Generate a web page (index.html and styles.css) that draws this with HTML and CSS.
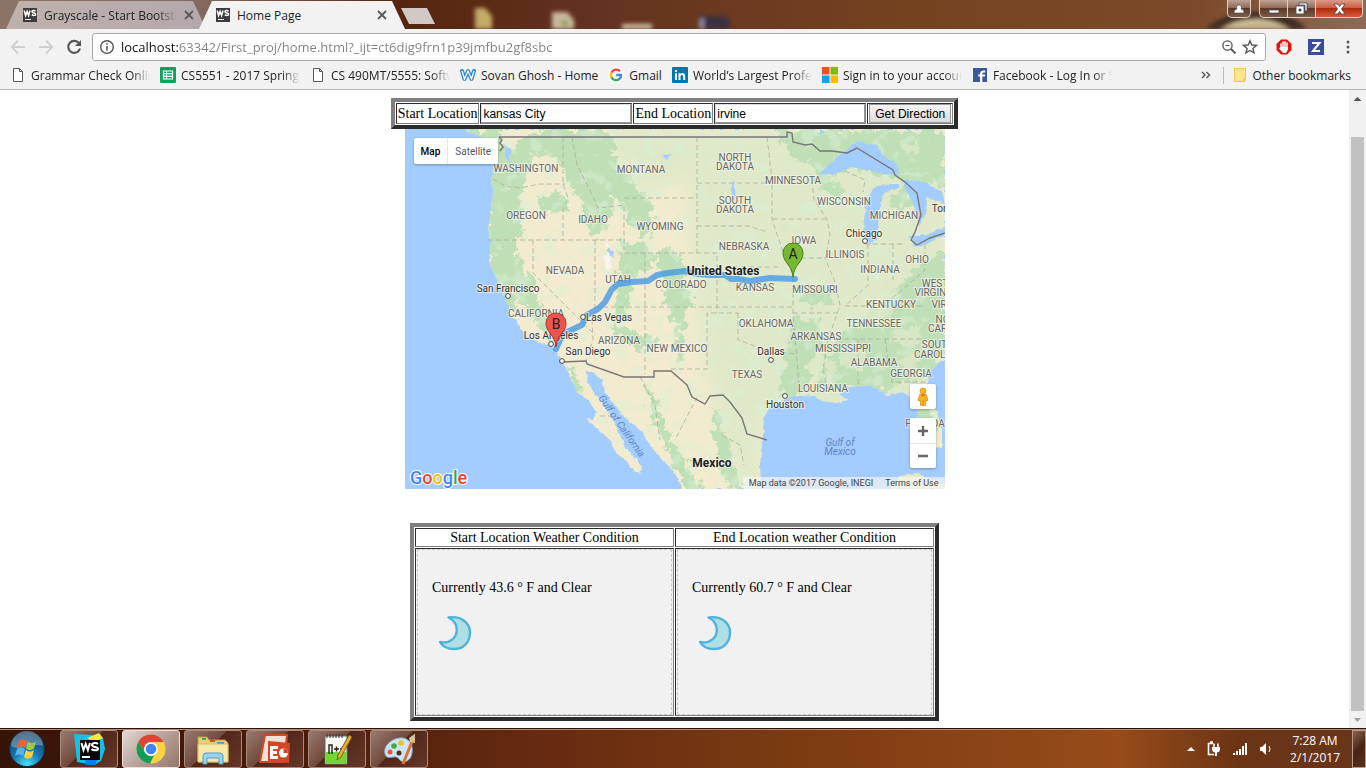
FILE: index.html
```html
<!DOCTYPE html>
<html lang="en">
<head>
<meta charset="utf-8">
<title>Home Page</title>
<link rel="stylesheet" href="styles.css">
</head>
<body>
<svg class="defs" aria-hidden="true">
  <defs>
    <symbol id="ws" viewBox="0 0 14 14"><rect width="14" height="14" fill="#3c3c3c"/><path d="M1.200 2.500l1.400 5 1.500-4 1.500 4 1.400-5M12.500 3.200c-1-1-3.500-.9-3.500.6 0 1.600 3.700.8 3.700 2.400 0 1.500-2.700 1.500-3.900.4" fill="none" stroke="#fff" stroke-width="1.500"/><path d="M2 11.500h6" stroke="#fff" stroke-width="1.200"/></symbol>
    <symbol id="doc" viewBox="0 0 16 16"><path d="M3.500 1.500h6l3 3v10h-9zM9.500 1.500v3h3" fill="#fff" stroke="#5a5a5a"/></symbol>
    <symbol id="close" viewBox="0 0 10 10"><path d="M1 1l8 8M9 1l-8 8" stroke="#5a5a5a" stroke-width="1.800"/></symbol>
    <symbol id="moon" viewBox="0 0 34 36"><path d="M10.500 2.500C23 .5 32.500 8 32 18.500C31.500 28 25 34 16 34C10 34 4.500 31.500 2 27C12.500 29 19 22 18.800 14.500C18.600 9 15.500 5 10.500 2.500Z" fill="#aedfe5" stroke="#50b2df" stroke-width="2.400" stroke-linejoin="round"/></symbol>
  </defs>
</svg>

<header class="browser">
  <div class="tabstrip">
    <div class="tab tab-back">
      <svg class="fav"><use href="#ws"/></svg><a class="tab-title" href="#">Grayscale - Start Bootstra</a>
      <button class="plain" aria-label="Close tab"><svg class="x"><use href="#close"/></svg></button>
    </div>
    <div class="tab tab-front">
      <svg class="fav"><use href="#ws"/></svg><a class="tab-title" href="#">Home Page</a>
      <button class="plain" aria-label="Close tab"><svg class="x"><use href="#close"/></svg></button>
    </div>
    <button class="newtab" aria-label="New tab"></button>
    <div class="wallpaper" aria-hidden="true">
      <svg width="280" height="29" viewBox="0 0 280 29"><g class="soft"><path d="M8 8h10l7 8v13H8z" fill="#c4ab68"/><path d="M85 12h15l7 8v9H85z" fill="#c7b99c"/><path d="M93 23l6-3 2 6z" fill="#77903f"/><path d="M155 24h30v5h-30z" fill="#cfc0a4"/><path d="M232 16h22l8 2v11h-30z" fill="#3a3040"/><path d="M232 18h6v11h-6z" fill="#8b86a5"/></g></svg>
      <svg width="140" height="29" viewBox="0 0 140 29"><g class="soft"><path d="M8 29Q30 10 70 12Q96 14 110 29Z" fill="#3d2c20"/><path d="M22 29Q40 17 62 18Q82 20 94 29Z" fill="#c9b894"/></g></svg>
    </div>
    <div class="window-buttons">
      <button class="glass user" aria-label="Profile"><svg width="12" height="12" viewBox="0 0 12 12"><path d="M6 2a2.500 2.500 0 0 1 2 4c2 .5 3 1.500 3 4H1c0-2.500 1-3.500 3-4a2.500 2.500 0 0 1 2-4z" fill="#fff" stroke="#555" stroke-width=".7"/></svg></button>
      <div class="glass-group">
        <button class="glass min" aria-label="Minimize"><svg width="12" height="12" viewBox="0 0 12 12"><path d="M1 7h10v3H1z" fill="#fff" stroke="#445" stroke-width=".8"/></svg></button>
        <button class="glass max" aria-label="Restore"><svg width="13" height="13" viewBox="0 0 13 13"><path d="M4 1h8v8h-2V3H4z" fill="#fff" stroke="#445" stroke-width=".8"/><path d="M1 4h8v8H1zM4 7v2h2V7z" fill="#fff" fill-rule="evenodd" stroke="#445" stroke-width=".8"/></svg></button>
        <button class="glass shut" aria-label="Close"><svg width="13" height="12" viewBox="0 0 13 12"><path d="M1 1h3.500l2 2.500L8.500 1H12L8.500 6l3.500 5H8.500l-2-2.500-2 2.500H1l3.500-5z" fill="#fff" stroke="#445" stroke-width=".8"/></svg></button>
      </div>
    </div>
  </div>

  <div class="toolbar">
    <button class="plain nav" aria-label="Back"><svg width="16" height="16" viewBox="0 0 16 16"><path d="M15 8H2M8 1.500L1.800 8 8 14.500" fill="none" stroke="#cfcfcf" stroke-width="1.900"/></svg></button>
    <button class="plain nav" aria-label="Forward"><svg width="16" height="16" viewBox="0 0 16 16"><path d="M1 8h13M8 1.500L14.200 8 8 14.500" fill="none" stroke="#cfcfcf" stroke-width="1.900"/></svg></button>
    <button class="plain nav" aria-label="Reload"><svg width="16" height="16" viewBox="0 0 16 16"><path d="M13 4.200A6 6 0 1 0 14 9.500" fill="none" stroke="#555" stroke-width="2.100"/><path d="M15 1v6H9z" fill="#555"/></svg></button>
    <div class="omnibox">
      <svg width="16" height="16" viewBox="0 0 16 16"><circle cx="8" cy="8" r="6.300" fill="none" stroke="#555" stroke-width="1.400"/><path d="M8 7v4.500M8 4.200v1.600" stroke="#555" stroke-width="1.600"/></svg>
      <input class="url" type="text" aria-label="Address" value="localhost:63342/First_proj/home.html?_ijt=ct6dig9frn1p39jmfbu2gf8sbc">
      <button class="plain" aria-label="Zoom"><svg width="14" height="14" viewBox="0 0 14 14"><circle cx="5.500" cy="5.500" r="4.600" fill="none" stroke="#555" stroke-width="1.300"/><path d="M9 9l4.500 4.500" stroke="#555" stroke-width="1.800"/><path d="M3.500 5.500h4" stroke="#555"/></svg></button>
      <button class="plain" aria-label="Bookmark"><svg width="16" height="16" viewBox="0 0 16 16"><path d="M8 1.800l1.800 4.200 4.700.4-3.600 3 1.100 4.500L8 11.500l-4 2.400 1.100-4.500-3.600-3 4.700-.4z" fill="none" stroke="#555" stroke-width="1.400"/></svg></button>
    </div>
    <div class="extensions">
      <button class="plain" aria-label="Adblock"><svg width="16" height="16" viewBox="0 0 16 16"><path d="M5 .5h6L15.500 5v6L11 15.500H5L.5 11V5z" fill="#e0140f"/><path d="M5 5v4M7 3v6M9 2.700V9M11 4v6" stroke="#fff" stroke-width="1.500" stroke-linecap="round"/><path d="M4.300 8h7.400v3L10 14H7L3 9.500z" fill="#fff"/></svg></button>
      <button class="plain" aria-label="Zotero"><svg width="16" height="16" viewBox="0 0 16 16"><rect width="16" height="16" fill="#3d4b9c"/><path d="M4 4h7.500L5 12h7" fill="none" stroke="#fff" stroke-width="2"/></svg></button>
      <button class="plain" aria-label="Menu"><svg width="16" height="16" viewBox="0 0 16 16"><g fill="#5a5a5a"><circle cx="8" cy="3" r="1.500"/><circle cx="8" cy="8" r="1.500"/><circle cx="8" cy="13" r="1.500"/></g></svg></button>
    </div>
  </div>

  <nav class="bookmarks">
    <a href="#"><svg><use href="#doc"/></svg><span class="cut">Grammar Check Onlin</span></a>
    <a href="#"><svg viewBox="0 0 16 16"><rect width="16" height="16" rx="1" fill="#12a15c"/><path d="M3.500 4h9v8h-9zM3.500 6.700h9M3.500 9.300h9M6.500 4v8" fill="none" stroke="#fff" stroke-width="1.200"/></svg><span class="cut">CS5551 - 2017 Spring</span></a>
    <a href="#"><svg><use href="#doc"/></svg><span class="cut">CS 490MT/5555: Softw</span></a>
    <a href="#"><svg viewBox="0 0 16 16"><path d="M2 4l2.500 8L8 4l3.500 8L14 4" fill="none" stroke="#2d87df" stroke-width="4" stroke-linejoin="round" stroke-linecap="round"/><path d="M2 4l2.500 8L8 4l3.500 8L14 4" fill="none" stroke="#fff" stroke-width="1.300"/></svg><span>Sovan Ghosh - Home</span></a>
    <a href="#"><svg viewBox="0 0 16 16"><circle cx="8" cy="8" r="8" fill="#fff"/><g fill="none" stroke-width="2.300"><path d="M12 4.300A5.100 5.100 0 0 0 3.500 5.600" stroke="#ea4335"/><path d="M3.500 5.500a5.100 5.100 0 0 0 0 5" stroke="#fbbc05"/><path d="M3.500 10.400a5.100 5.100 0 0 0 7.900 1.500" stroke="#34a853"/><path d="M11.200 12.200A5 5 0 0 0 13 8H8.200" stroke="#4285f4"/></g></svg><span>Gmail</span></a>
    <a href="#"><svg viewBox="0 0 16 16"><rect width="16" height="16" rx="1" fill="#0077b5"/><path d="M3 6.200h2V13H3zM3 3h2v2H3zM6.500 6.200h2v1c1.300-1.900 4.700-1.300 4.700 1.600V13h-2V9.500c0-2.300-2.700-2-2.700 0V13h-2z" fill="#fff"/></svg><span class="cut">World’s Largest Profe</span></a>
    <a href="#"><svg viewBox="0 0 16 16"><path d="M0 0h7.500v7.500H0z" fill="#f25022"/><path d="M8.500 0H16v7.500H8.500z" fill="#7fba00"/><path d="M0 8.500h7.500V16H0z" fill="#00a4ef"/><path d="M8.500 8.500H16V16H8.500z" fill="#ffb900"/></svg><span class="cut">Sign in to your accour</span></a>
    <a href="#"><svg viewBox="0 0 16 16"><rect x="1" y="1" width="14" height="14" fill="#3b5998"/><path d="M8 15V9.500H6.200v-2H8C7.800 4.700 9.500 3 13.200 3.500v2c-2-.2-3 0-2.900 2h2.700v2h-2.700V15z" fill="#fff"/></svg><span class="cut">Facebook - Log In or S</span></a>
    <div class="more">
      <button class="plain" aria-label="More bookmarks"><svg width="10" height="8" viewBox="0 0 10 8"><path d="M1 1l3 3-3 3M5.500 1l3 3-3 3" fill="none" stroke="#555" stroke-width="1.400"/></svg></button>
      <a class="other" href="#"><svg viewBox="0 0 16 16"><path d="M2.500 1.500h11v9l-1 4h-10z" fill="#ffe591" stroke="#e9c651"/><path d="M11.500 13.500v-2.500h2v3.500h-3z" fill="#f4c842"/></svg><span>Other bookmarks</span></a>
    </div>
  </nav>
</header>

<div class="viewport">
  <main class="page">
    <table class="frame directions">
      <tr>
        <td><label for="start">Start Location</label></td>
        <td><input id="start" type="text" value="kansas City"></td>
        <td><label for="end">End Location</label></td>
        <td><input id="end" type="text" value="irvine"></td>
        <td><button class="go">Get Direction</button></td>
      </tr>
    </table>

    <section class="map" aria-label="Route map">
      <svg class="map-art" viewBox="405 129 540 360">
        <defs>
          <filter id="rough" x="-5%" y="-5%" width="110%" height="110%"><feTurbulence type="fractalNoise" baseFrequency=".11" numOctaves="3" seed="4"/><feDisplacementMap in="SourceGraphic" scale="20" xChannelSelector="R" yChannelSelector="G"/></filter>
          <filter id="coast" x="-5%" y="-5%" width="110%" height="110%"><feTurbulence type="fractalNoise" baseFrequency=".2" numOctaves="2" seed="8"/><feDisplacementMap in="SourceGraphic" scale="4" xChannelSelector="R" yChannelSelector="G"/></filter>
          <filter id="speckle" x="0" y="0" width="100%" height="100%"><feTurbulence type="fractalNoise" baseFrequency=".07" numOctaves="4" seed="12"/><feColorMatrix values="0 0 0 0 .7  0 0 0 0 .86  0 0 0 0 .66  0 7 0 0 -3.8"/></filter>
          <filter id="feather"><feGaussianBlur stdDeviation="9"/></filter>
          <clipPath id="land"><path d="M465 129L486 140L497 150L493 169L491 179L493 192L491 209L488 230L491 242L489 262L497 279L502 292L505 296L509 312L518 323L523 333L532 339L542 343L552 347L558 353L562 362L570 375L577 392L588 400L597 413L593 419L585 418L597 428L612 442L615 452L625 460L635 472L640 474L642 467L635 458L625 448L620 435L612 418L603 403L595 395L588 382L586 372L592 372L602 380L605 392L615 405L625 418L642 432L652 448L665 462L678 478L683 489L761 489L760 465L762 442L764 428L763 418L770 408L780 402L790 397L810 395L823 401L837 403L847 400L839 394L850 388L870 385L887 395L903 392L910 397L918 413L915 432L933 448L942 447L942 428L933 402L927 385L930 372L937 363L945 360V129Z"/></clipPath>
        </defs>
        <rect x="405" y="129" width="540" height="360" fill="#a3ccff"/>
        <g filter="url(#coast)">
          <g clip-path="url(#land)">
            <rect x="405" y="129" width="540" height="360" fill="#f2ebcf"/>
            <path d="M685 129H945V420H760V489H740L715 410L700 330L690 240Z" fill="#dfe9c9" filter="url(#feather)"/>
            <path d="M600 129H700V170L640 195Z" fill="#dfe9c9" filter="url(#feather)"/>
            <g fill="#bfdfb7" filter="url(#rough)">
              <path d="M465 129H500L503 150L540 129H610L618 165L640 190L655 210L650 238L628 225L615 190L606 230L590 240L582 205L570 185L560 160L535 155L522 185L524 230L510 246L488 240L490 180Z"/>
              <path d="M486 235L510 235L522 265L540 300L548 320L560 340L550 342L530 315L510 285L520 318L507 310L490 268Z"/>
              <path d="M620 240L650 245L655 262L632 278L625 320L612 320L618 285Z"/>
              <path d="M655 250L680 252L690 300L685 330L670 318L665 295Z"/>
              <path d="M535 196L562 190L570 210L545 214Z"/>
              <path d="M608 325L640 330L660 345L640 350L620 340Z"/>
              <path d="M670 350L682 320L685 362Z"/>
              <path d="M644 380L655 395L665 425L680 455L705 489H684L665 445L650 415Z"/>
              <path d="M715 405L728 440L742 489H730L715 450Z"/>
              <path d="M565 360L575 370L582 395L575 390Z"/>
              <path d="M775 129H945V185L900 180L860 170L830 175L850 195L820 190L812 165L790 155Z"/>
              <path d="M885 190L908 190L914 207L895 210Z"/>
              <path d="M793 315L820 320L825 345L808 360L812 380L800 395L780 398L783 365Z"/>
              <path d="M815 390L830 350L850 330L885 300L920 265L945 250V355L920 380L880 392L850 388Z"/>
              <path d="M795 285L830 290L835 306L800 305Z"/>
              <path d="M912 400L928 400L938 430L922 425Z"/>
            </g>
            <g fill="#dfe9c9" opacity=".75" filter="url(#rough)"><path d="M850 310L900 290L890 320L855 330ZM845 345L870 350L860 370L842 365ZM890 335L925 325L910 350ZM895 360L920 355L915 380ZM825 355L835 365L833 385L825 380ZM900 145L920 142L915 160Z"/></g>
            <rect x="405" y="129" width="540" height="360" filter="url(#speckle)" opacity=".5"/>
            <g fill="#a3ccff">
              <path d="M818 174L830 164L843 152L857 142L877 145L882 155L897 164L900 175L883 174L867 170L850 167L837 174Z"/>
              <path d="M898 184L887 184L874 187L866 202L863 232L870 245L877 239L879 212L884 193L900 188Z"/>
              <path d="M903 180L923 182L942 192L945 204L927 197L926 215L919 226L913 203L905 189Z"/>
              <path d="M909 235L927 235L945 226V234L927 244L915 247Z"/>
              <path d="M607 246L613 252L614 258L607 252ZM505 145L511 149L509 162L505 155ZM733 180L736 194L734 202L731 190ZM820 129L825 132L821 135ZM662 155L671 154L667 159Z"/>
            </g>
            <path d="M604 256L609 254L612 270L606 268ZM604 245L608 242L608 248Z" fill="#f8f6ef"/>
          </g>
          <path d="M890 489L900 476L916 473L934 480L945 486V489Z" fill="#e4e9c8"/>
        </g>
        <path class="state" d="M493 179L505 186L520 188L540 184H565M563 137V184L568 198L563 208V240M488 240H625M572 137L577 165L590 190L598 208L624 205V253M624 198H697M697 137V253M624 253H717V313M697 183H772M697 226H748L768 232M533 240V273L595 335M595 240V307L592 320L593 340L586 361M645 253V374M595 307H793M717 267H780M738 313V340L760 348L795 354M671 369H707V313H738M767 137L772 180V219L785 258L793 275V313L796 350L800 397M773 219H827M785 258H825M793 313H840M820 137M812 180L814 200L827 219L830 235L825 258L835 282L840 305L828 340L823 370L827 388H842M865 244H905M868 244V285L845 306H925M893 244V280M925 244V270L890 300M836 339H925M858 339V386M885 339L892 382H927M845 171L865 180L863 192M697 397L675 440M600 416H612M640 377L655 405L660 440M722 435L740 445L744 465"/>
        <g class="border">
          <path d="M499 137H787V132L792 133L793 142L805 145L812 144L820 151L832 151L847 153L857 148L893 170L895 175L905 182L917 193L921 215L915 232L911 240L917 245L930 238L945 233"/>
          <path d="M562 362L586 361L587 364L624 377H654V371H671L687 385L692 397L705 404L710 396L723 395L730 402L742 418L747 434L767 440"/>
          <path d="M499 137l3 3-2 3 3 4-3 4"/>
        </g>
        <g class="label state-name">
          <text x="526" y="172">WASHINGTON</text><text x="641" y="173">MONTANA</text><text x="735" y="161">NORTH</text><text x="735" y="170">DAKOTA</text><text x="793" y="184">MINNESOTA</text><text x="526" y="219">OREGON</text><text x="593" y="223">IDAHO</text><text x="660" y="230">WYOMING</text><text x="735" y="204">SOUTH</text><text x="735" y="213">DAKOTA</text><text x="844" y="205">WISCONSIN</text><text x="894" y="219">MICHIGAN</text><text x="744" y="250">NEBRASKA</text><text x="804" y="244">IOWA</text><text x="845" y="258">ILLINOIS</text><text x="880" y="273">INDIANA</text><text x="917" y="263">OHIO</text><text x="565" y="274">NEVADA</text><text x="618" y="283">UTAH</text><text x="681" y="288">COLORADO</text><text x="755" y="291">KANSAS</text><text x="815" y="293">MISSOURI</text><text x="935" y="287">WEST</text><text x="935" y="296">VIRGINIA</text><text x="891" y="308">KENTUCKY</text><text x="952" y="308">VIRGINIA</text><text x="536" y="317">CALIFORNIA</text><text x="766" y="327">OKLAHOMA</text><text x="874" y="327">TENNESSEE</text><text x="952" y="323">NORTH</text><text x="952" y="332">CAROLINA</text><text x="816" y="340">ARKANSAS</text><text x="619" y="344">ARIZONA</text><text x="677" y="352">NEW MEXICO</text><text x="843" y="352">MISSISSIPPI</text><text x="874" y="366">ALABAMA</text><text x="938" y="348">SOUTH</text><text x="938" y="358">CAROLINA</text><text x="747" y="378">TEXAS</text><text x="911" y="377">GEORGIA</text><text x="823" y="392">LOUISIANA</text><text x="925" y="427">FLORIDA</text>
        </g>
        <path class="route" d="M795 279L770 278L750 281L738 279L731 279L725 275L710 275L698 274L685 271L668 273L657 275L648 281L632 282L618 284L612 289L605 302L598 309L587 315L582 325L565 333L560 340L556 349"/>
        <g class="label city">
          <text x="508" y="292">San Francisco</text><text x="609" y="321">Las Vegas</text><text x="551" y="339">Los Angeles</text><text x="588" y="355">San Diego</text><text x="864" y="237">Chicago</text><text x="771" y="355">Dallas</text><text x="785" y="408">Houston</text><text x="949" y="212">Toronto</text>
        </g>
        <g class="label country"><text x="723" y="275">United States</text><text x="712" y="467">Mexico</text></g>
        <g class="sea"><text x="840" y="446">Gulf of</text><text x="840" y="455">Mexico</text><text transform="translate(619 428) rotate(55)">Gulf of California</text></g>
        <g class="dot"><circle cx="508" cy="296" r="2.400"/><circle cx="583" cy="317" r="2.400"/><circle cx="551" cy="344" r="2.400"/><circle cx="562" cy="361" r="2.400"/><circle cx="865" cy="241" r="2.400"/><circle cx="771" cy="360" r="2.400"/><circle cx="785" cy="396" r="2.400"/></g>
        <g class="pin"><path d="M793 277C792 264 783 263 783 253A10 10 0 0 1 803 253C803 263 794 264 793 277Z" fill="#76b832" stroke="#4b7d1b"/><text x="793" y="259">A</text></g>
        <g class="pin"><path d="M556 347C555 334 546 333 546 323A10 10 0 0 1 566 323C566 333 557 334 556 347Z" fill="#ef5350" stroke="#b13230"/><text x="556" y="329">B</text></g>
        <text class="google" x="410" y="484"><tspan fill="#4285f4">G</tspan><tspan fill="#ea4335">o</tspan><tspan fill="#fbbc05">o</tspan><tspan fill="#4285f4">g</tspan><tspan fill="#34a853">l</tspan><tspan fill="#ea4335">e</tspan></text>
      </svg>
      <div class="map-types"><button class="current">Map</button><button>Satellite</button></div>
      <div class="map-tools">
        <button class="pegman" aria-label="Street View"><svg width="14" height="20" viewBox="0 0 14 20"><circle cx="7" cy="4" r="3" fill="#fbb21d" stroke="#c98510" stroke-width=".6"/><path d="M3.500 7.500h7l1.500 6h-2l-.6 5H4.600l-.6-5H2z" fill="#fbb21d" stroke="#c98510" stroke-width=".6"/><path d="M4.500 7.500h5L7 10z" fill="#e5731d"/><path d="M7 13v5" stroke="#c98510" stroke-width=".8"/></svg></button>
        <div class="zoomer"><button aria-label="Zoom in"><svg width="10" height="10" viewBox="0 0 10 10"><path d="M5 0v10M0 5h10" stroke="#666" stroke-width="2.400"/></svg></button><button aria-label="Zoom out"><svg width="10" height="10" viewBox="0 0 10 10"><path d="M0 5h10" stroke="#666" stroke-width="2.400"/></svg></button></div>
      </div>
      <div class="credits"><span>Map data ©2017 Google, INEGI</span><a href="#">Terms of Use</a></div>
    </section>

    <table class="frame weather">
      <tr><th>Start Location Weather Condition</th><th>End Location weather Condition</th></tr>
      <tr>
        <td><div class="report"><p>Currently 43.6 ° F and Clear</p><svg class="moon" role="img" aria-label="Clear night"><use href="#moon"/></svg></div></td>
        <td><div class="report"><p>Currently 60.7 ° F and Clear</p><svg class="moon" role="img" aria-label="Clear night"><use href="#moon"/></svg></div></td>
      </tr>
    </table>
  </main>
  <div class="scrollbar" aria-hidden="true">
    <svg width="17" height="17" viewBox="0 0 17 17"><path d="M4.500 11h8l-4-4z" fill="#505050"/></svg>
    <div class="track"><div class="thumb"></div></div>
    <svg width="17" height="17" viewBox="0 0 17 17"><path d="M5 7h7l-3.500 4z" fill="#a3a3a3"/></svg>
  </div>
</div>

<footer class="taskbar">
  <button class="plain orb" aria-label="Start"><svg width="38" height="38" viewBox="0 0 38 38"><defs><radialGradient id="orb" cx=".5" cy=".95" r=".9"><stop offset="0" stop-color="#4ae4ff"/><stop offset=".45" stop-color="#1679b4"/><stop offset="1" stop-color="#123f68"/></radialGradient></defs><circle cx="19" cy="19" r="17.500" fill="url(#orb)" stroke="#1b2c3c"/><path d="M3 16A16 15 0 0 1 35 16C27 12 13 22 3 16Z" fill="#fff" opacity=".28"/><path d="M11 11c3-2 5-2 8 0l-2 7c-3-2-5-2-8 0z" fill="#f1622c"/><path d="M20 11.500c3 2 5 2 8 0l-2 7c-3 2-5 2-8 0z" fill="#9bcb44"/><path d="M9 19c3-2 5-2 8 0l-2 7c-3-2-5-2-8 0z" fill="#53b5ec"/><path d="M18 20c3 2 5 2 8 0l-2 7c-3 2-5 2-8 0z" fill="#ffd03c"/></svg></button>
  <div class="apps">
    <button aria-label="WebStorm"><svg viewBox="0 0 32 32"><path d="M1 1l18 1 11 3 2 11-4 12-7 4-17-3z" fill="#18bfe5"/><path d="M14 5L26 0l4 5-8 4z" fill="#f4ec43"/><path d="M12 25h13l-3 7H13z" fill="#0a7fe0"/><rect x="7" y="7" width="20" height="20" fill="#080808"/><path d="M8.500 10l2 7 2.200-6 2.200 6 2-7M25 11c-2-2-6-1-6 1 0 2.500 6 1.300 6 3.700 0 2.300-5 2-6.500.3" fill="none" stroke="#fff" stroke-width="2"/><path d="M9 24h8" stroke="#fff" stroke-width="2"/></svg></button>
    <button class="running" aria-label="Chrome"><svg viewBox="0 0 32 32"><circle cx="16" cy="16" r="14.500" fill="#fbd23f"/><path d="M3.400 8.800A14.500 14.500 0 0 1 28.600 9H16a7 7 0 0 0-6.500 9.500z" fill="#db4437"/><path d="M3.400 8.800L10 19.500A7 7 0 0 0 19 22.500L15 30.500A14.500 14.500 0 0 1 3.400 8.800z" fill="#0f9d58"/><circle cx="16" cy="16" r="6.800" fill="#fff"/><circle cx="16" cy="16" r="5.300" fill="#4285f4"/></svg></button>
    <button aria-label="Explorer"><svg viewBox="0 0 32 32"><path d="M1 4h9l2 3h16l3 3v19H1z" fill="#e9cf79" stroke="#b89a48"/><path d="M5 5h4v2H5z" fill="#35b34a"/><path d="M13 7h5v2h-5z" fill="#d84c36"/><path d="M20 9h7v2h-7z" fill="#3595dd"/><path d="M1 11h30v18H1z" fill="#f8e9a7" stroke="#d2ba6d"/><path d="M6 31v-8q0-3 3-3h14q3 0 3 3v8h-4v-6H10v6z" fill="#98d4ee" stroke="#4e9dc6"/></svg></button>
    <button aria-label="PowerPoint"><svg viewBox="0 0 32 32"><path d="M6 2h22l-3 27H1z" fill="#f5e1d4" stroke="#d24726" stroke-width="2"/><path d="M9 8l22 2-1 20-21-2z" fill="#d24726"/><path d="M11 13h8v3h-5v2h4v3h-4v2h5v3h-8z" fill="#fff"/><circle cx="24.500" cy="20" r="4.500" fill="#fff"/><path d="M24.500 20v-4.500a4.500 4.500 0 0 1 4.500 4.500z" fill="#d24726"/></svg></button>
    <button aria-label="Notepad++"><svg viewBox="0 0 32 32"><path d="M4 3h22v28H4z" fill="#f8fbf5" stroke="#686868"/><path d="M4.500 19h21v11.500h-21z" fill="#70d632"/><path d="M6 1v4M9 1v4M12 1v4M15 1v4M18 1v4M21 1v4" stroke="#333"/><path d="M8 21v-9h3v9M13 16h5M15.500 13.500v5M19 16h5M21.500 13.500v5" stroke="#222" stroke-width="1.400" fill="none"/><path d="M28 2l3 2-11 20-4 3 1-5z" fill="#e9af34" stroke="#7c5923"/></svg></button>
    <button aria-label="Paint"><svg viewBox="0 0 32 32"><path d="M12 6C23 2 31 9 29 20C28 29 19 31 16 26C13 21 6 27 3 23C-1 17 4 9 12 6Z" fill="#cfe4f3" stroke="#7ba5c4"/><circle cx="7" cy="19" r="2.500" fill="#df5548"/><circle cx="11" cy="13" r="2.800" fill="#44ad42"/><circle cx="18" cy="10" r="2.800" fill="#edbc35"/><circle cx="16" cy="20" r="2.500" fill="#4d3324"/><path d="M30 6L20 31" stroke="#d9772d" stroke-width="3"/><path d="M27 9l-1-4 7-5-1 10z" fill="#d9c09a"/></svg></button>
  </div>
  <div class="tray">
    <svg width="10" height="6" viewBox="0 0 10 6"><path d="M1 5h8L5 1z" fill="#fff"/></svg>
    <svg width="16" height="16" viewBox="0 0 16 16"><path d="M7 2.500H2.500v11H8M4 1h3" stroke="#fff" stroke-width="1.600" fill="none"/><path d="M6 6h8v3q-1 2.500-3 2.500V15H9v-3.500Q7 11.500 6 9z" fill="#fff"/><path d="M8 2.500V6M12 2.500V6" stroke="#fff" stroke-width="1.600"/></svg>
    <svg width="16" height="14" viewBox="0 0 16 14"><path d="M1 11h2v2H1zM4 9h2v4H4zM7 7h2v6H7zM10 4h2v9h-2zM13 1h2v12h-2z" fill="#fff"/></svg>
    <svg width="14" height="14" viewBox="0 0 14 14"><path d="M2 5h2l4-4v12L4 9H2z" fill="#fff"/><path d="M11 4q2 3 0 6" fill="none" stroke="#fff"/></svg>
    <time class="clock"><span>7:28 AM</span><span>2/1/2017</span></time>
    <button class="desktop" aria-label="Show desktop"></button>
  </div>
</footer>
</body>
</html>
```

FILE: styles.css
```css
* { box-sizing: border-box; }
body { margin: 0; height: 100vh; display: flex; flex-direction: column; overflow: hidden; background: #fff; font-family: "Open Sans", "Noto Sans", sans-serif; font-size: 12px; color: #222; }
a { color: inherit; text-decoration: none; }
svg { flex: none; display: block; }
.defs { position: absolute; width: 0; height: 0; }
.plain { border: 0; padding: 0; background: none; display: flex; align-items: center; justify-content: center; }

/* Browser frame */
.browser { flex: none; }
.tabstrip { height: 29px; display: flex; align-items: flex-start; padding-left: 6px; background: linear-gradient(90deg, #8d7469 0, #84695f 200px, #55250f 400px, #643320 600px, #74421f 900px, #7c4a2a 1200px, #8f6a57 100%); }
.tab { height: 28px; margin-top: 1px; display: flex; align-items: center; gap: 7px; padding: 0 12px 0 17px; clip-path: polygon(0 100%, 13px 0, calc(100% - 13px) 0, 100% 100%); }
.tab-back { width: 200px; background: linear-gradient(90deg, #bfb2ac, #b3a8ac); }
.tab-back .fav + .tab-title { mask-image: linear-gradient(90deg, #000 85%, transparent); }
.tab-front { width: 206px; margin-left: -7px; background: #f2f2f2; padding-right: 18px; }
.tab-title { flex: 1; overflow: hidden; white-space: nowrap; }
.fav { width: 14px; height: 14px; }
.x { width: 10px; height: 10px; }
.newtab { width: 34px; height: 16px; margin: 8px 0 0 -4px; border: 0; padding: 0; background: #d0c9c5; clip-path: polygon(0 0, 26px 0, 100% 100%, 8px 100%); }
.wallpaper { flex: 1; display: flex; justify-content: space-between; padding-left: 32px; margin-right: -110px; }
.soft { filter: blur(2px); }
.window-buttons { display: flex; gap: 8px; padding-right: 3px; position: relative; }
.glass-group { display: flex; }
.glass { height: 18px; padding: 0; display: flex; align-items: center; justify-content: center; border: 1px solid #e0d0c6; border-top: 0; background: linear-gradient(#bda294, #8a6653 50%, #5d3a28 50%, #7d5c4a); }
.user { width: 24px; border-radius: 0 0 5px 5px; }
.min { width: 29px; border-radius: 0 0 0 5px; }
.max { width: 27px; border-width: 0 0 1px; }
.shut { width: 48px; border-radius: 0 0 5px 0; background: linear-gradient(#dd9a86, #c9583d 50%, #b22a0c 50%, #d65a3c); }
.toolbar { display: flex; align-items: center; padding: 4px 10px 0; background: #f2f2f2; }
.nav { width: 16px; margin-right: 12px; }
.nav + .nav + .nav { margin-right: 10px; }
.omnibox { flex: 1; height: 28px; display: flex; align-items: center; gap: 6px; padding: 0 7px 0 6px; border: 1px solid #a9a9a9; border-radius: 3px; background: #fff; }
.url { flex: 1; min-width: 0; border: 0; padding: 0; outline: 0; font: 13px "Open Sans", "Noto Sans", sans-serif; color: transparent; background: linear-gradient(90deg, #111 57px, #808080 57px); -webkit-background-clip: text; background-clip: text; }
.extensions { display: flex; gap: 16px; padding-left: 10px; }
.bookmarks { height: 29px; display: flex; align-items: center; gap: 10px; padding: 0 15px 0 10px; background: #f2f2f2; border-bottom: 1px solid #b6b6b6; }
.bookmarks a { display: flex; align-items: center; gap: 5px; white-space: nowrap; }
.bookmarks a svg { width: 16px; height: 16px; }
.cut { width: 119px; overflow: hidden; mask-image: linear-gradient(90deg, #000 85%, transparent); }
.more { margin-left: auto; display: flex; align-items: center; gap: 12px; }
.more .other { gap: 4px; padding-left: 8px; border-left: 1px solid #bbb; }

/* Page */
.viewport { flex: 1; min-height: 0; display: flex; }
.page { flex: 1; display: flex; flex-direction: column; align-items: center; padding-top: 8px; font-family: "Liberation Serif", serif; font-size: 14px; color: #000; overflow: hidden; }
.frame { border: 4px solid; border-color: #808080 #2c2c2c #2c2c2c #808080; border-collapse: separate; border-spacing: 1px; }
.frame td, .frame th { border: 1px solid; border-color: #2c2c2c #808080 #808080 #2c2c2c; padding: 0; font-weight: normal; white-space: nowrap; }
.directions label { padding: 0 1px; }
.directions input { display: block; width: 150px; height: 19px; border: 1px solid; border-color: #ddd #999 #999 #ddd; padding: 0 1px; font: 12px "Liberation Sans", sans-serif; }
.go { display: block; height: 19px; margin: 0 1px; padding: 0 5px; border: 1px solid #9a9a9a; background: linear-gradient(#f4f4f4, #dcdcdc); font: 12px "Liberation Sans", sans-serif; }
.map { position: relative; width: 540px; max-width: 100%; }
.map-art { width: 100%; height: auto; font-family: Roboto, sans-serif; }
.state { fill: none; stroke: #a9a99c; stroke-width: 1; stroke-dasharray: 5 3; opacity: .75; }
.border { fill: none; stroke: #777; stroke-width: 1.4; }
.label, .sea, .pin { text-anchor: middle; }
.label { paint-order: stroke; stroke: #f5f5e8; stroke-width: 2px; stroke-opacity: .7; }
.state-name { font-size: 10px; fill: #666; }
.city { font-size: 10px; fill: #333; }
.country { font-size: 12px; font-weight: bold; fill: #222; }
.sea { font-size: 10px; font-style: italic; fill: #5b84c4; }
.dot { fill: #fff; stroke: #444; }
.route { fill: none; stroke: #3c94ea; stroke-width: 6; stroke-linejoin: round; stroke-linecap: round; opacity: .75; }
.pin { font-size: 14px; fill: #222; }
.google { font-size: 18px; font-weight: 500; paint-order: stroke; stroke: #fff; stroke-width: 2px; }
.map-types { position: absolute; left: 9px; top: 9px; display: flex; }
.map-types button { height: 26px; border: 0; padding: 0 7px; background: #fff; font: 10px Roboto, sans-serif; color: #565656; border-left: 1px solid #e6e6e6; }
.map-types .current { color: #000; font-weight: 500; border-left: 0; }
.map-tools { position: absolute; right: 9px; bottom: 21px; display: grid; gap: 9px; }
.map-tools button { width: 26px; height: 25px; padding: 0; border: 0; background: #fff; display: flex; align-items: center; justify-content: center; }
.pegman, .zoomer, .map-types { border-radius: 2px; box-shadow: 0 1px 3px rgba(0, 0, 0, .3); overflow: hidden; }
.zoomer button + button { border-top: 1px solid #e6e6e6; }
.credits { position: absolute; right: 0; bottom: 0; display: flex; gap: 12px; padding: 0 6px; background: rgba(245, 245, 245, .7); font: 9px/12px Roboto, sans-serif; color: #444; }
.weather { margin-top: 34px; width: 529px; max-width: 100%; table-layout: fixed; }
.weather th { line-height: 17px; }
.weather td { padding: 0 1px; background: #f1f1f1; }
.report { height: 166px; border: 1px dashed #c8c8c8; padding: 30px 14px 0; }
.report p { margin: 0 0 19px; line-height: 16px; }
.moon { width: 34px; height: 36px; margin-left: 6px; }
.scrollbar { width: 17px; display: flex; flex-direction: column; background: #f1f1f1; }
.track { flex: 1; display: flex; padding: 30px 2px 0; }
.thumb { flex: 1; background: #c1c1c1; }

/* Taskbar */
.taskbar { flex: none; height: 40px; display: flex; align-items: center; border-top: 1px solid #2a130a; box-shadow: inset 0 1px #b98c72; background: linear-gradient(90deg, #351408 0, #4b1c0a 300px, #622810 500px, #7c3b12 800px, #974b19 1120px, #6b3414 1240px, #68351c 100%); }
.orb { margin: 0 14px 0 8px; }
.apps { display: flex; gap: 4px; }
.apps button { width: 58px; height: 38px; padding: 0; display: flex; align-items: center; justify-content: center; border: 1px solid #a68b80; border-radius: 3px; background: linear-gradient(135deg, #9a7b70 0, #70493b 45%, #512619 46%, #653729 100%); }
.apps .running { border-color: #eee0d8; background: linear-gradient(135deg, #e2d7d2 0, #b8a29a 50%, #95766b 100%); }
.apps svg { width: 32px; height: 32px; }
.tray { margin-left: auto; height: 100%; display: flex; align-items: center; gap: 10px; color: #fff; }
.clock { display: flex; flex-direction: column; align-items: center; line-height: 17px; padding: 0 2px 0 8px; }
.desktop { width: 14px; height: 38px; padding: 0; border: 1px solid #b79a8c; background: linear-gradient(135deg, #8a6450, #4a2212 50%, #5a301c); }
```
